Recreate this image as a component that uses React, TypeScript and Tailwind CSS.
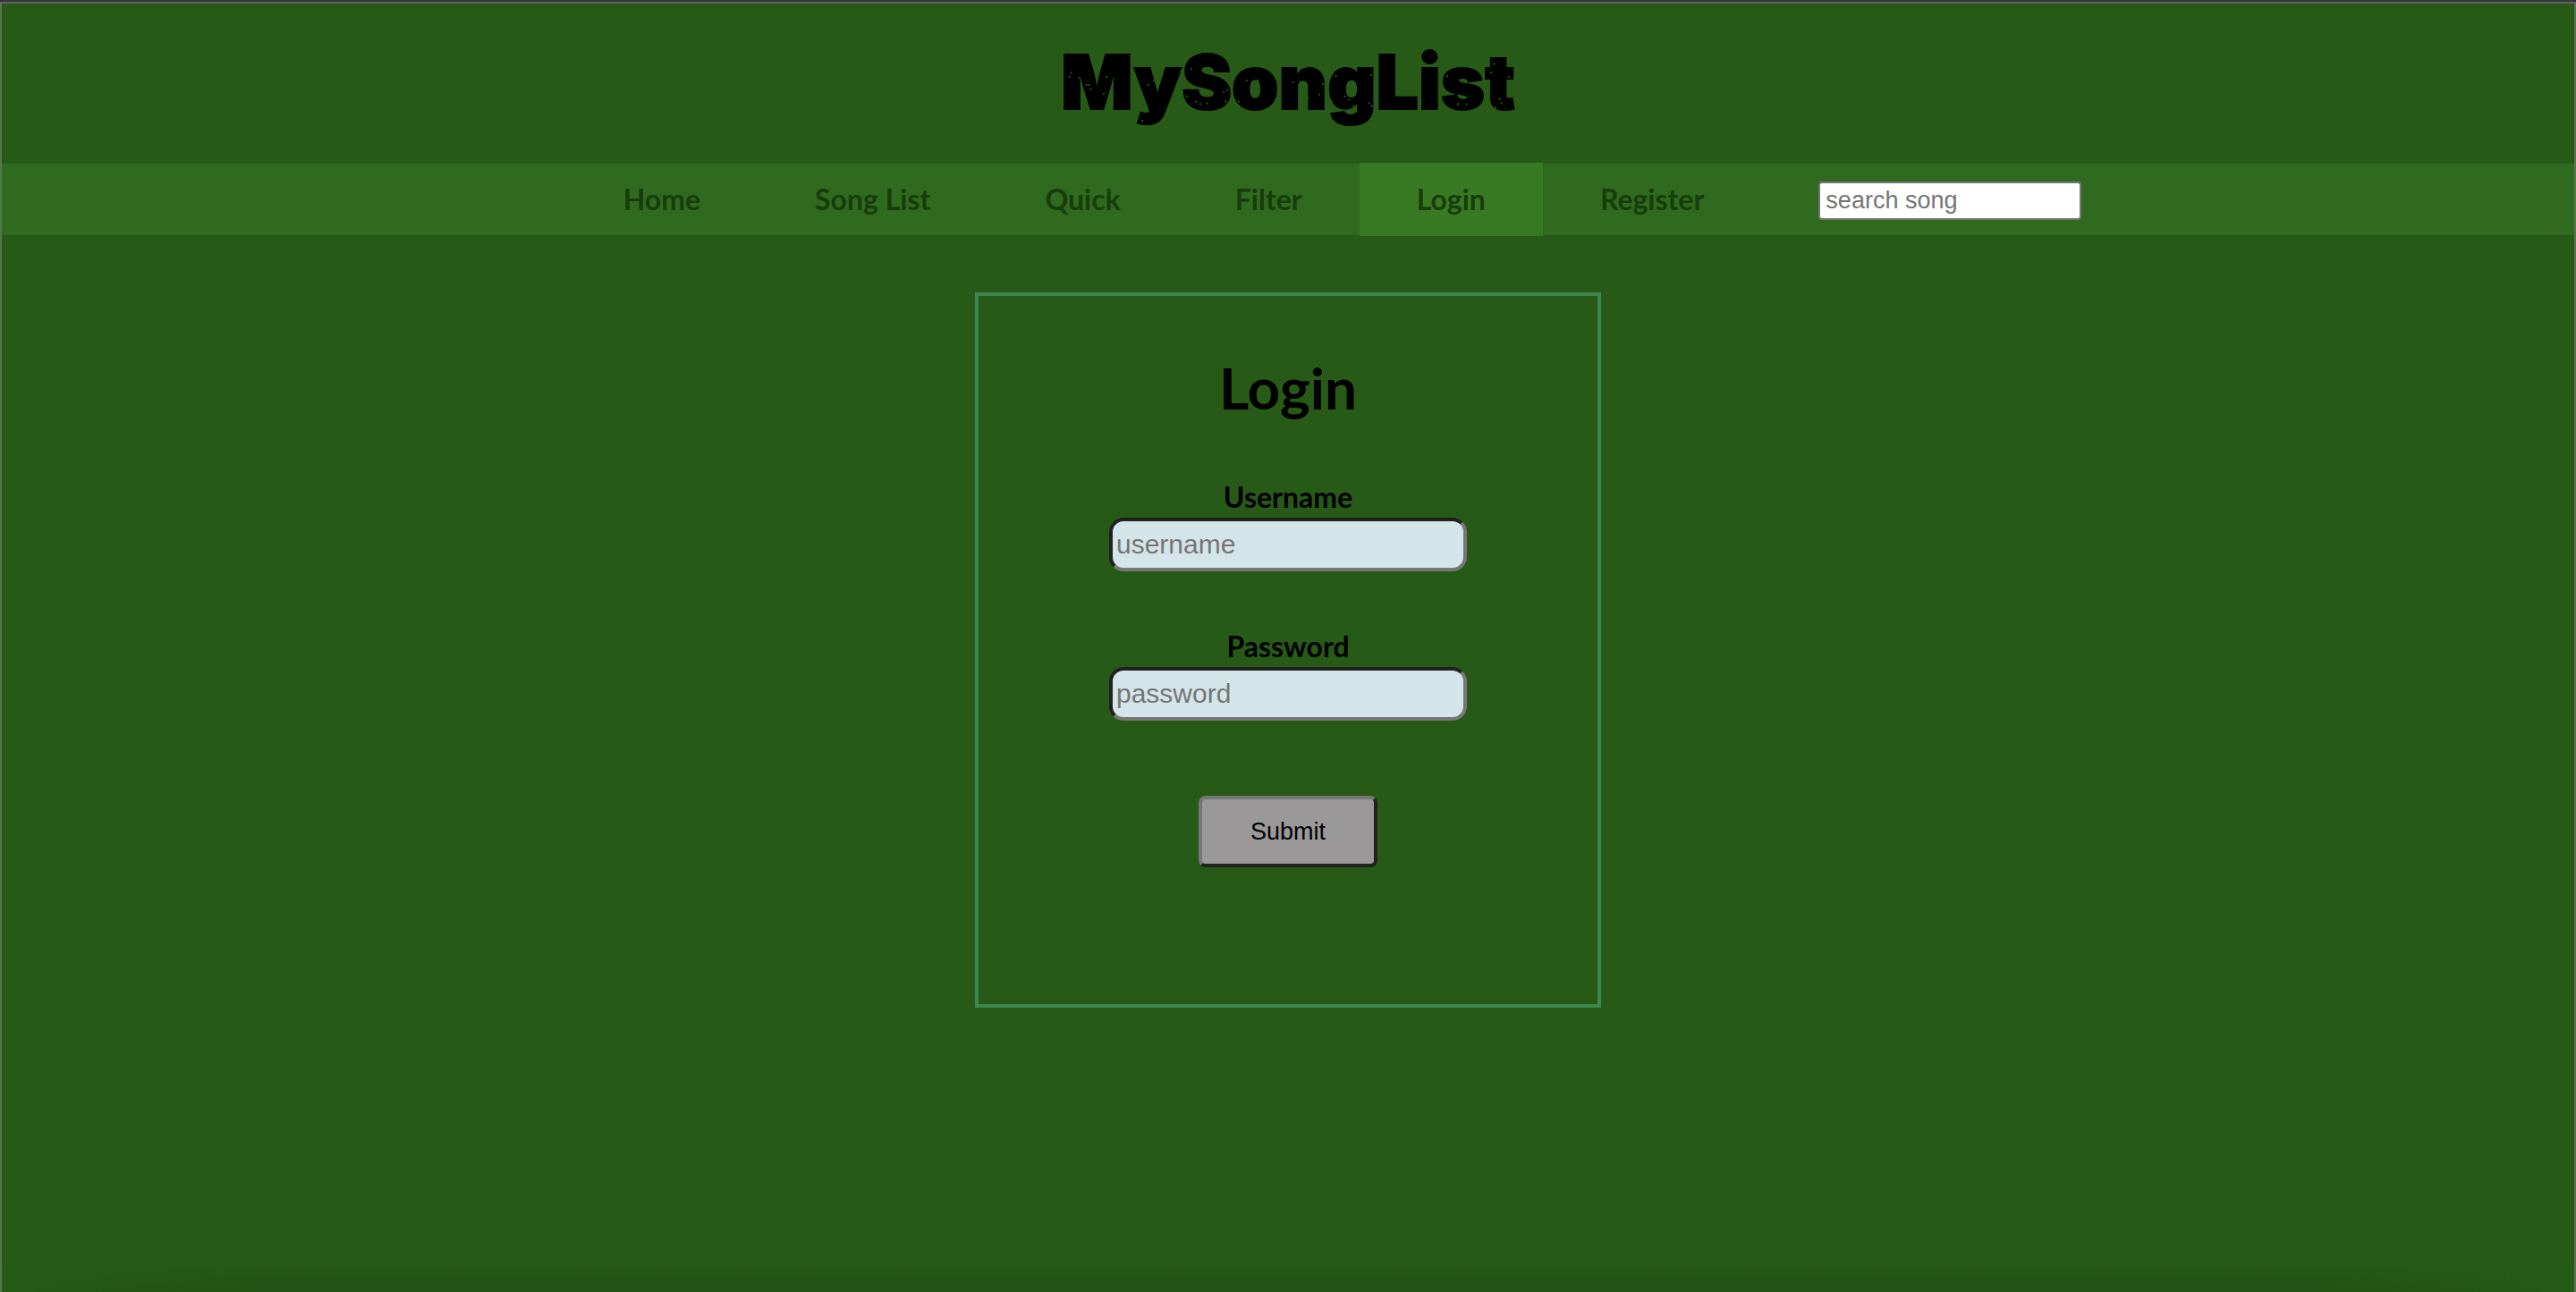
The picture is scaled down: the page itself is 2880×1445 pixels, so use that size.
import { useId } from "react";

const links = ["Home", "Song List", "Quick", "Filter", "Login", "Register"];

const specks = [
  [11, 20], [20, 26], [28, 34], [33, 39], [9, 25], [51, 25], [48, 44], [31, 34],
  [89, 40], [99, 34], [105, 29], [92, 61], [85, 69], [92, 75], [136, 18], [148, 16],
  [143, 47], [153, 53], [158, 56], [166, 55], [185, 42], [189, 40], [211, 29], [224, 29],
  [187, 53], [202, 53], [204, 61], [249, 31], [264, 31], [249, 47], [274, 46], [277, 42],
  [281, 49], [313, 24], [298, 33], [294, 45], [308, 53], [309, 58], [323, 47], [328, 51],
  [333, 58], [336, 64], [296, 72], [353, 23], [351, 55], [354, 58], [407, 20], [407, 58],
  [432, 31], [440, 24], [455, 29], [432, 53], [452, 56], [462, 56], [490, 20], [493, 10],
  [510, 25], [500, 50], [502, 55], [495, 60],
];

function Field({ label, type, name }: { label: string; type: string; name: string }) {
  const id = useId();
  return (
    <div className="flex flex-col items-center gap-1">
      <label htmlFor={id} className="text-[32px] leading-[38px] font-bold">
        {label}
      </label>
      <input
        id={id}
        type={type}
        name={name}
        placeholder={name}
        className="h-[60px] w-[400px] rounded-2xl border-4 border-t-[#212121] border-r-[#767676] border-b-[#767676] border-l-[#212121] bg-[#d4e5e9] px-1 font-['Liberation_Sans',Arial,sans-serif] text-[30px] text-black placeholder:text-[#757575]"
      />
    </div>
  );
}

export default function App() {
  return (
    <div className="flex min-h-screen flex-col border-x-2 border-[#527847] bg-[#265a16] font-[Lato,sans-serif] text-black">
      <div className="-mx-0.5 h-0.5 bg-[#36363a]" />
      <div className="-mx-0.5 h-0.5 bg-[#616165]" />
      <header className="flex h-[179px] justify-center pt-8">
        <h1 className="relative h-[112px] font-[Inter,sans-serif] text-[84px] leading-[112px] font-black [-webkit-text-stroke:2px_black]">
          MySongList
          <svg
            aria-hidden="true"
            viewBox="0 0 518 112"
            className="absolute inset-0 h-full w-full"
            fill="#265a16"
          >
            {specks.map(([x, y]) => (
              <rect key={`${x}-${y}`} x={x} y={y + 24} width="2" height="2" />
            ))}
          </svg>
        </h1>
      </header>
      <nav className="flex h-20 items-center justify-center bg-[#306a1e] pl-20">
        <ul className="flex">
          {links.map((link) => (
            <li key={link}>
              <a
                href="#"
                className={
                  link === "Login"
                    ? "block bg-[#387a24] px-16 py-[22px] text-[32px] leading-[38px] font-bold text-[#173d0b]"
                    : "block px-16 py-[22px] text-[32px] leading-[38px] font-bold text-[#173d0b]"
                }
              >
                {link}
              </a>
            </li>
          ))}
        </ul>
        <input
          type="search"
          aria-label="Search song"
          placeholder="search song"
          className="mt-0.5 ml-16 h-[43px] w-[294px] rounded-sm border-2 border-[#767676] bg-white px-1.5 font-['Liberation_Sans',Arial,sans-serif] text-[27px] text-black placeholder:text-[#757575]"
        />
      </nav>
      <main className="flex justify-center pt-16">
        <form
          onSubmit={(e) => e.preventDefault()}
          className="flex min-h-[800px] w-[700px] flex-col items-center border-4 border-[#3e8850] pt-16"
        >
          <h2 className="text-[64px] leading-[78px] font-bold">Login</h2>
          <div className="mt-16 flex flex-col gap-[65px]">
            <Field label="Username" type="text" name="username" />
            <Field label="Password" type="password" name="password" />
          </div>
          <button
            type="submit"
            className="mt-[84px] h-20 w-[200px] rounded-lg border-4 border-t-[#767676] border-r-[#212121] border-b-[#212121] border-l-[#767676] bg-[#9a9898] font-['Liberation_Sans',Arial,sans-serif] text-[27px]"
          >
            Submit
          </button>
        </form>
      </main>
      <div className="mt-auto h-8 bg-linear-to-b from-[#265a16] to-[#245215] [mask-image:linear-gradient(to_right,transparent,black_10%,black_90%,transparent)]" />
    </div>
  );
}
